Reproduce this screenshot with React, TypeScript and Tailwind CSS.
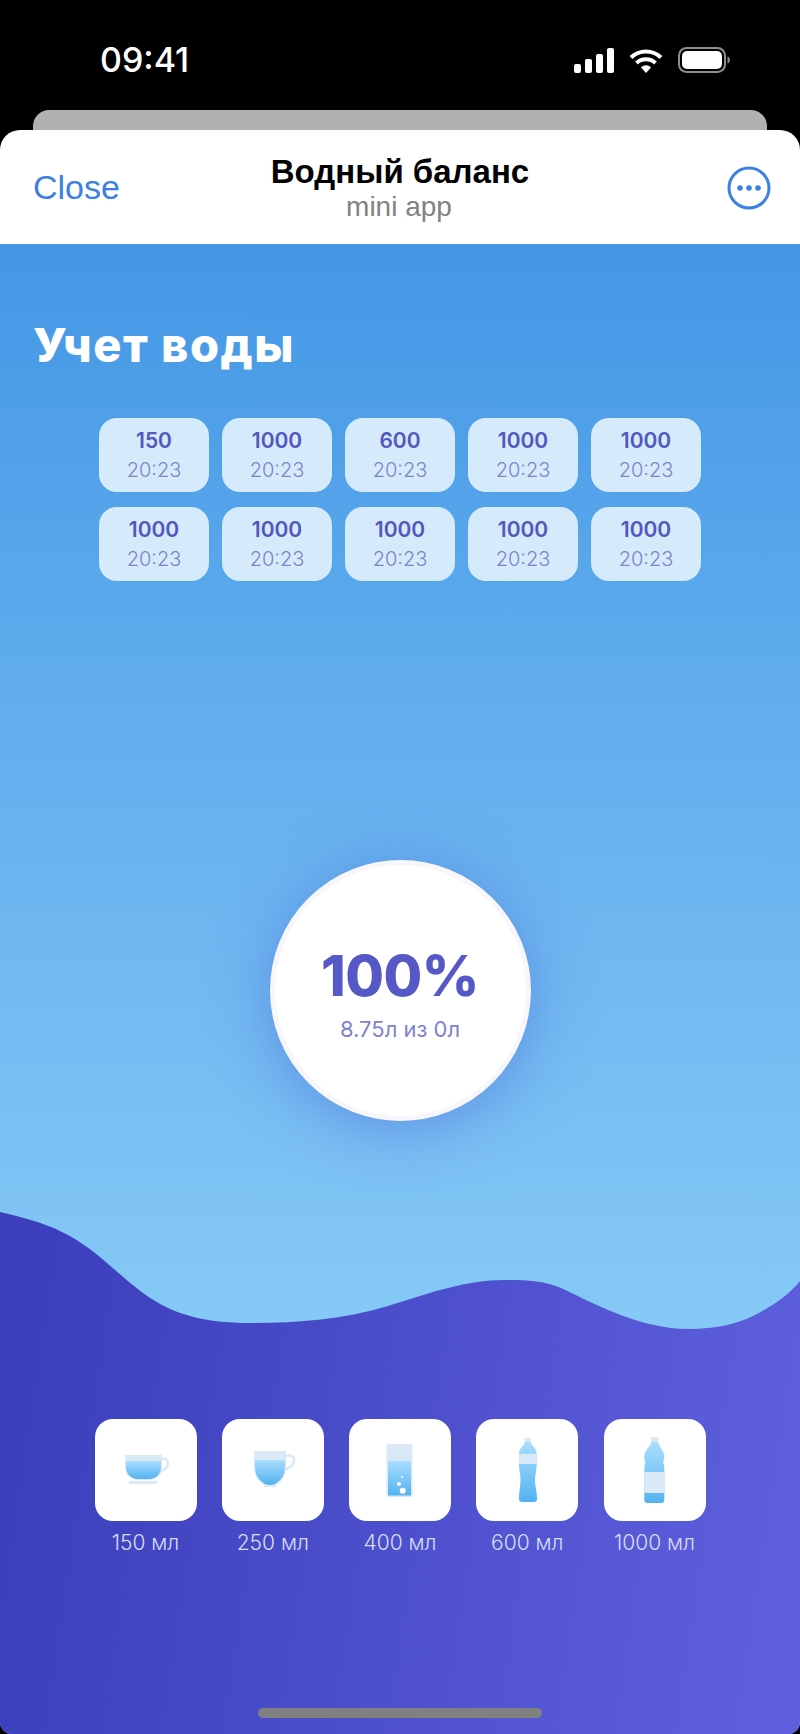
import React from "react";

const logs = [
  ["150", "1000", "600", "1000", "1000"],
  ["1000", "1000", "1000", "1000", "1000"],
];

const Defs = ({ id }: { id: string }) => (
  <defs>
    <linearGradient id={id} x1="0" y1="0" x2="0" y2="1">
      <stop offset="0" stopColor="#a9defe" />
      <stop offset="1" stopColor="#52b2f0" />
    </linearGradient>
  </defs>
);

const Cup = () => (
  <svg viewBox="0 0 102 102" className="w-full h-full">
    <Defs id="cup" />
    <path d="M65 41c5-3 8 0 8 3 0 5-5 8-10 9" fill="none" stroke="#d9e9f7" strokeWidth="2.500" />
    <rect x="34" y="62" width="28" height="3" fill="#d9e9f7" />
    <path d="M30 36h37v12c0 8-6 13-13 13H43c-7 0-13-5-13-13z" fill="#d9e9f7" />
    <path d="M31 42h35v6c0 8-6 12-12 12H43c-6 0-12-4-12-12z" fill="url(#cup)" />
  </svg>
);

const Mug = () => (
  <svg viewBox="0 0 102 102" className="w-full h-full">
    <Defs id="mug" />
    <path d="M62 38c6-3 10-1 10 3 0 5-4 8-10 10" fill="none" stroke="#d9e9f7" strokeWidth="2.500" />
    <rect x="42" y="64" width="12" height="4" fill="#d9e9f7" />
    <path d="M32 32h32v14c0 8-2 12-5 16-3 3-6 5-11 5s-8-2-11-5c-3-4-5-8-5-16z" fill="#d9e9f7" />
    <path d="M33 41h30v5c0 8-2 12-5 15-3 3-6 5-10 5s-7-2-10-5c-3-3-5-7-5-15z" fill="url(#mug)" />
  </svg>
);

const Glass = () => (
  <svg viewBox="0 0 102 102" className="w-full h-full">
    <Defs id="glass" />
    <rect x="37.500" y="25" width="26" height="53" fill="#d9e9f7" />
    <rect x="39" y="42" width="23" height="34.500" fill="url(#glass)" />
    <circle cx="53.700" cy="71.700" r="3" fill="#fff" />
    <circle cx="50" cy="65" r="2" fill="#fff" />
    <circle cx="53" cy="58" r="1" fill="#fff" />
  </svg>
);

const BottleSmall = () => (
  <svg viewBox="0 0 102 102" className="w-full h-full">
    <Defs id="small" />
    <rect x="48.500" y="19" width="6.500" height="4" rx="1" fill="#d9e9f7" />
    <path d="M49 23h5.500c1 4 6.200 6 6.200 12v10c0 7-1.700 10-1.700 16s2 11 2 19c0 2-1 3-3 3H46c-2 0-3-1-3-3 0-8 1.500-12 1.500-19S43 52 43 45V35c0-6 5-8 6-12z" fill="url(#small)" />
    <rect x="43" y="35" width="17.700" height="10" fill="#d9e9f7" />
  </svg>
);

const BottleBig = () => (
  <svg viewBox="0 0 102 102" className="w-full h-full">
    <Defs id="big" />
    <rect x="47" y="18" width="7.500" height="5" rx="1" fill="#d9e9f7" />
    <path d="M47.500 23h6.500c1 5 6.300 8 6.300 15 0 3-1 4-1 5.500s1 3 1 5V81c0 2-1 3-3 3H43.300c-2 0-3-1-3-3V48.500c0-2 1-3.500 1-5S40.300 41 40.300 38c0-7 6-10 7.200-15z" fill="url(#big)" />
    <rect x="40.300" y="53" width="20" height="21" fill="#d9e9f7" />
  </svg>
);

const portions = [
  { label: "150 мл", icon: <Cup /> },
  { label: "250 мл", icon: <Mug /> },
  { label: "400 мл", icon: <Glass /> },
  { label: "600 мл", icon: <BottleSmall /> },
  { label: "1000 мл", icon: <BottleBig /> },
];

const StatusIcons = () => (
  <div className="flex items-center">
    <svg width="40" height="25" viewBox="0 0 40 25" fill="#fff">
      <rect x="0" y="16" width="7" height="9" rx="2" />
      <rect x="11" y="11" width="7" height="14" rx="2" />
      <rect x="22" y="6" width="7" height="19" rx="2" />
      <rect x="33" y="0" width="7" height="25" rx="2" />
    </svg>
    <svg width="34" height="25" viewBox="0 0 34 25" fill="none" className="ml-[15px]">
      <path d="M2 9.500C10.500 1.500 23.500 1.500 32 9.500" stroke="#fff" strokeWidth="4" />
      <path d="M7.500 15C12.800 10 21.200 10 26.500 15" stroke="#fff" strokeWidth="4" />
      <path d="M12 19.500c3-3 7-3 10 0L17 25z" fill="#fff" />
    </svg>
    <svg width="52" height="26" viewBox="0 0 52 26" fill="none" className="ml-[15px]">
      <rect x="1" y="1" width="46" height="24" rx="7.500" stroke="#8e8e8e" strokeWidth="2" />
      <rect x="4" y="4" width="40" height="18" rx="5" fill="#fff" />
      <path d="M49.500 9.500c1.500.5 2.500 2 2.500 3.500s-1 3-2.500 3.500z" fill="#8e8e8e" />
    </svg>
  </div>
);

export default function App() {
  return (
    <div className="w-[800px] h-[1734px] bg-black flex flex-col overflow-hidden font-['Inter',sans-serif]">
      <div className="h-[110px] flex items-start justify-between pt-[44px] pl-[100px] pr-[70px] shrink-0">
        <span className="text-white text-[34px] leading-[32px] font-medium">09:41</span>
        <div className="pt-[3px]">
          <StatusIcons />
        </div>
      </div>
      <div className="h-[20px] mx-[33px] bg-[#b1b0ae] rounded-t-[16px] shrink-0"></div>

      <div className="flex-1 flex flex-col rounded-t-[20px] rounded-b-[12px] overflow-hidden">
        <header className="h-[114px] bg-white relative flex items-center justify-between pl-[33px] pr-[29px] shrink-0 font-['Liberation_Sans',sans-serif]">
          <span className="text-[34px] text-[#3d80e4]">Close</span>
          <div className="absolute left-0 right-0 top-[23px] flex flex-col items-center">
            <span className="text-[33px] leading-[38px] font-semibold text-black">Водный баланс</span>
            <span className="text-[28px] leading-[32px] text-[#828282] mr-[2px]">mini app</span>
          </div>
          <svg width="44" height="44" viewBox="0 0 44 44" fill="none" className="mt-[2px]">
            <circle cx="22" cy="22" r="20" stroke="#3d80e4" strokeWidth="3" />
            <circle cx="13" cy="22" r="2.800" fill="#3d80e4" />
            <circle cx="22" cy="22" r="2.800" fill="#3d80e4" />
            <circle cx="31" cy="22" r="2.800" fill="#3d80e4" />
          </svg>
        </header>

        <main className="flex-1 relative flex flex-col bg-gradient-to-b from-[#4497e6] to-[#85c9f6] to-[72%]">
          <h1 className="mt-[75px] ml-[33px] text-[47px] leading-[52px] font-extrabold text-white tracking-[1.500px]">Учет воды</h1>

          <div className="mt-[47px] flex flex-col items-center gap-[15px]">
            {logs.map((row, i) => (
              <div key={i} className="flex gap-[13px]">
                {row.map((amount, j) => (
                  <div key={j} className="w-[110px] h-[74px] rounded-[18px] bg-[#d5ebfb] flex flex-col items-center justify-center">
                    <span className="text-[21px] leading-[28px] font-semibold text-[#5357bf]">{amount}</span>
                    <span className="text-[20px] leading-[28px] font-light text-[#7d84c8] mt-[1px]">20:23</span>
                  </div>
                ))}
              </div>
            ))}
          </div>

          <div className="mt-[279px] self-center w-[261px] h-[261px] rounded-full bg-white border-[5px] border-[#f6f6fb] shadow-[0_8px_60px_rgba(70,100,215,0.5)] flex flex-col items-center justify-center pt-[4px]">
            <span className="text-[56px] leading-[66px] font-extrabold text-[#5558c6] tracking-[-0.500px]">100%</span>
            <span className="text-[22px] leading-[28px] text-[#7f82cf] mt-[6px]">8.75л из 0л</span>
          </div>

          <section className="mt-auto relative h-[522px] pt-[207px]">
            <svg viewBox="0 0 800 522" className="absolute inset-0 w-full h-full">
              <defs>
                <linearGradient id="deep" x1="0" y1="0.45" x2="1" y2="0.55">
                  <stop offset="0" stopColor="#3b3fbb" />
                  <stop offset="1" stopColor="#5e5fdc" />
                </linearGradient>
              </defs>
              <path
                d="M0 0C17 4 34 8 51 15C64 20.500 75 26.400 87 35C106 48.700 124 67 143 81C173 103 205 111 250 111C295 111 343 108 388 94C430 81 465 68 505 68C527 68 545 69 561 76C595 92 640 117 689 117C715 117 737 112 755 103C772 94 788 84 800 69V522H0Z"
                fill="url(#deep)"
              />
            </svg>
            <div className="relative flex justify-center gap-[25.250px]">
              {portions.map((p) => (
                <div key={p.label} className="w-[102px] flex flex-col items-center">
                  <div className="w-[102px] h-[102px] rounded-[18px] bg-white">{p.icon}</div>
                  <span className="mt-[8px] text-[21px] leading-[28px] font-light text-[#d6ddf8] whitespace-nowrap">{p.label}</span>
                </div>
              ))}
            </div>
            <div className="absolute left-[258px] bottom-[16px] w-[284px] h-[10px] rounded-[5px] bg-[#808080]"></div>
          </section>
        </main>
      </div>
    </div>
  );
}
